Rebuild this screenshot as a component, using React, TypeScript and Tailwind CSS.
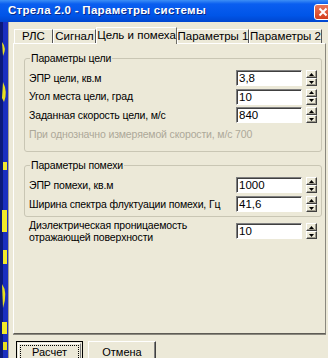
import type { ReactNode } from "react";

const ui = { fontFamily: '"Liberation Sans", Arial, sans-serif' };

function Spinner() {
  return (
    <div className="flex flex-col w-[11px] h-[16px]">
      {["up", "down"].map((d) => (
        <div
          key={d}
          className="flex-1 flex items-center justify-center bg-[#ECE9D8] border border-t-white border-l-white border-r-[#404040] border-b-[#404040] shadow-[inset_-1px_-1px_0_#9d9a8c]"
        >
          <svg width="5" height="3" viewBox="0 0 5 3">
            {d === "up" ? <path d="M2.5 0 L5 3 L0 3 Z" fill="#000" /> : <path d="M0 0 L5 0 L2.5 3 Z" fill="#000" />}
          </svg>
        </div>
      ))}
    </div>
  );
}

function Field({ value }: { value: string }) {
  return (
    <div className="flex items-center gap-[4px] shrink-0">
      <div className="w-[66px] h-[16px] bg-white border border-t-[#7f7f7f] border-l-[#7f7f7f] border-r-white border-b-white shadow-[inset_1px_1px_0_#404040] pl-[2px] text-[11.5px] leading-[14px] text-black">
        {value}
      </div>
      <Spinner />
    </div>
  );
}

function Row({ label, value }: { label: ReactNode; value: string }) {
  return (
    <div className="flex items-center h-[16px]">
      <div className="flex-1 whitespace-nowrap text-[10.5px] tracking-[-0.15px] leading-[13px] text-black">{label}</div>
      <Field value={value} />
    </div>
  );
}

function Group({ title, className, children }: { title: string; className?: string; children: ReactNode }) {
  return (
    <div className={"relative border border-[#c9c6b4] rounded-[3px] pl-[4px] pr-[4px] " + (className ?? "")}>
      <span className="absolute -top-[7px] left-[5px] px-[1px] bg-[#ECE9D8] text-[10.5px] tracking-[-0.15px] leading-[13px] text-black">
        {title}
      </span>
      {children}
    </div>
  );
}

function Tab({ label, w, active }: { label: string; w: string; active?: boolean }) {
  return active ? (
    <div className={w + " h-[17px] -mb-[1px] relative z-10 bg-[#ECE9D8] border border-b-0 border-t-white border-l-white border-r-[#6e6d66] flex items-center justify-center whitespace-nowrap text-[11.5px] text-black"}>
      {label}
    </div>
  ) : (
    <div className={w + " h-[14px] mt-[3px] border-t border-l border-r border-t-white border-l-white border-r-[#555] flex items-center justify-center whitespace-nowrap text-[11.5px] text-black"}>
      {label}
    </div>
  );
}

export default function App() {
  return (
    <div className="w-[328px] h-[358px] overflow-hidden flex flex-col bg-[#ECE9D8]" style={ui}>
      {/* title bar */}
      <div className="h-[22px] shrink-0 flex items-center justify-between pl-[8px] bg-[linear-gradient(to_bottom,#3d8ff5_0%,#0a5ef0_18%,#0055e8_70%,#0046cf_100%)]">
        <span className="text-white font-bold text-[11.5px] tracking-[0.3px] [text-shadow:1px_1px_0_#0a2a8a]">
          Стрела 2.0 - Параметры системы
        </span>
        <div className="w-[20px] h-[16px] mt-[2px] mr-[-6px] rounded-[3px] border border-white bg-[linear-gradient(to_bottom,#e8765a,#d43e1c)] flex items-center pl-[3px]">
          <svg width="10" height="10" viewBox="0 0 10 10">
            <path d="M1.5 1.5 L8.5 8.5 M8.5 1.5 L1.5 8.5" stroke="#fff" strokeWidth="2" />
          </svg>
        </div>
      </div>

      <div className="flex flex-1 min-h-0">
        {/* desktop behind the window */}
        <div className="w-[8px] shrink-0 bg-[#1a2fc0] relative overflow-hidden">
          <svg width="8" height="336" viewBox="0 0 8 336" className="absolute inset-0">
            <rect x="0" y="0" width="3" height="336" fill="#0b1a7a" />
            <path d="M2 20 Q7 26 3 34 Z" fill="#e8e020" />
            <path d="M3 60 Q8 70 4 80 L2 76 Z" fill="#e8e020" />
            <rect x="3" y="140" width="4" height="8" fill="#f0e830" />
            <rect x="2" y="188" width="5" height="22" fill="#f2ea2a" />
            <rect x="3" y="228" width="4" height="14" fill="#f2ea2a" />
            <path d="M2 262 Q8 270 3 286 Z" fill="#e8e020" />
            <rect x="2" y="300" width="5" height="12" fill="#f2ea2a" />
            <rect x="3" y="320" width="4" height="8" fill="#e8e020" />
          </svg>
        </div>

        {/* window body */}
        <div className="flex-1 flex flex-col border-l border-[#a6a28f] pl-[4px] pr-[2px]">
          {/* tabs */}
          <div className="flex items-end h-[21px] pl-[1px] pt-[5px]">
            <Tab label="РЛС" w="w-[39px]" />
            <Tab label="Сигнал" w="w-[43px]" />
            <Tab label="Цель и помеха" w="w-[81px]" active />
            <Tab label="Параметры 1" w="w-[72px]" />
            <Tab label="Параметры 2" w="w-[73px]" />
          </div>

          {/* tab panel */}
          <div className="h-[291px] shrink-0 border border-t-white border-l-white border-r-[#8a887e] border-b-[#5e5c55] shadow-[0_1px_0_#8a887e] pl-[10px] pr-[3px] pt-[14px] flex flex-col">
            <Group title="Параметры цели" className="pt-[11px] pb-[10px]">
              <div className="flex flex-col gap-[2.5px]">
                <Row label="ЭПР цели, кв.м" value="3,8" />
                <Row label="Угол места цели, град" value="10" />
                <Row label="Заданная скорость цели, м/с" value="840" />
              </div>
              <div className="mt-[5px] h-[13px] whitespace-nowrap text-[10.5px] tracking-[-0.15px] leading-[13px] text-[#aca899]">
                При однозначно измеряемой скорости, м/с 700
              </div>
            </Group>

            <Group title="Параметры помехи" className="mt-[13px] pt-[11px] pb-[4px]">
              <div className="flex flex-col gap-[3px]">
                <Row label="ЭПР помехи, кв.м" value="1000" />
                <Row label="Ширина спектра флуктуации помехи, Гц" value="41,6" />
              </div>
            </Group>

            <div className="flex items-center mt-[2px] pl-[5px] pr-[5px]">
              <div className="flex-1 text-[10.5px] tracking-[-0.15px] leading-[12px] text-black">
                Диэлектрическая проницаемость
                <br />
                отражающей поверхности
              </div>
              <Field value="10" />
            </div>
          </div>

          {/* buttons */}
          <div className="flex gap-[5px] pl-[3px] mt-[7px]">
            <div className="w-[67px] h-[23px] border border-black p-[1px]">
              <div className="w-full h-full border border-t-white border-l-white border-r-[#808080] border-b-[#808080] flex items-center justify-center outline-1 outline-dotted outline-black -outline-offset-[3px] text-[11px] text-black">
                Расчет
              </div>
            </div>
            <div className="w-[68px] h-[23px] border border-t-white border-l-white border-r-[#404040] border-b-[#404040] shadow-[inset_-1px_-1px_0_#808080] flex items-center justify-center text-[11px] text-black">
              Отмена
            </div>
          </div>
        </div>
      </div>
    </div>
  );
}
